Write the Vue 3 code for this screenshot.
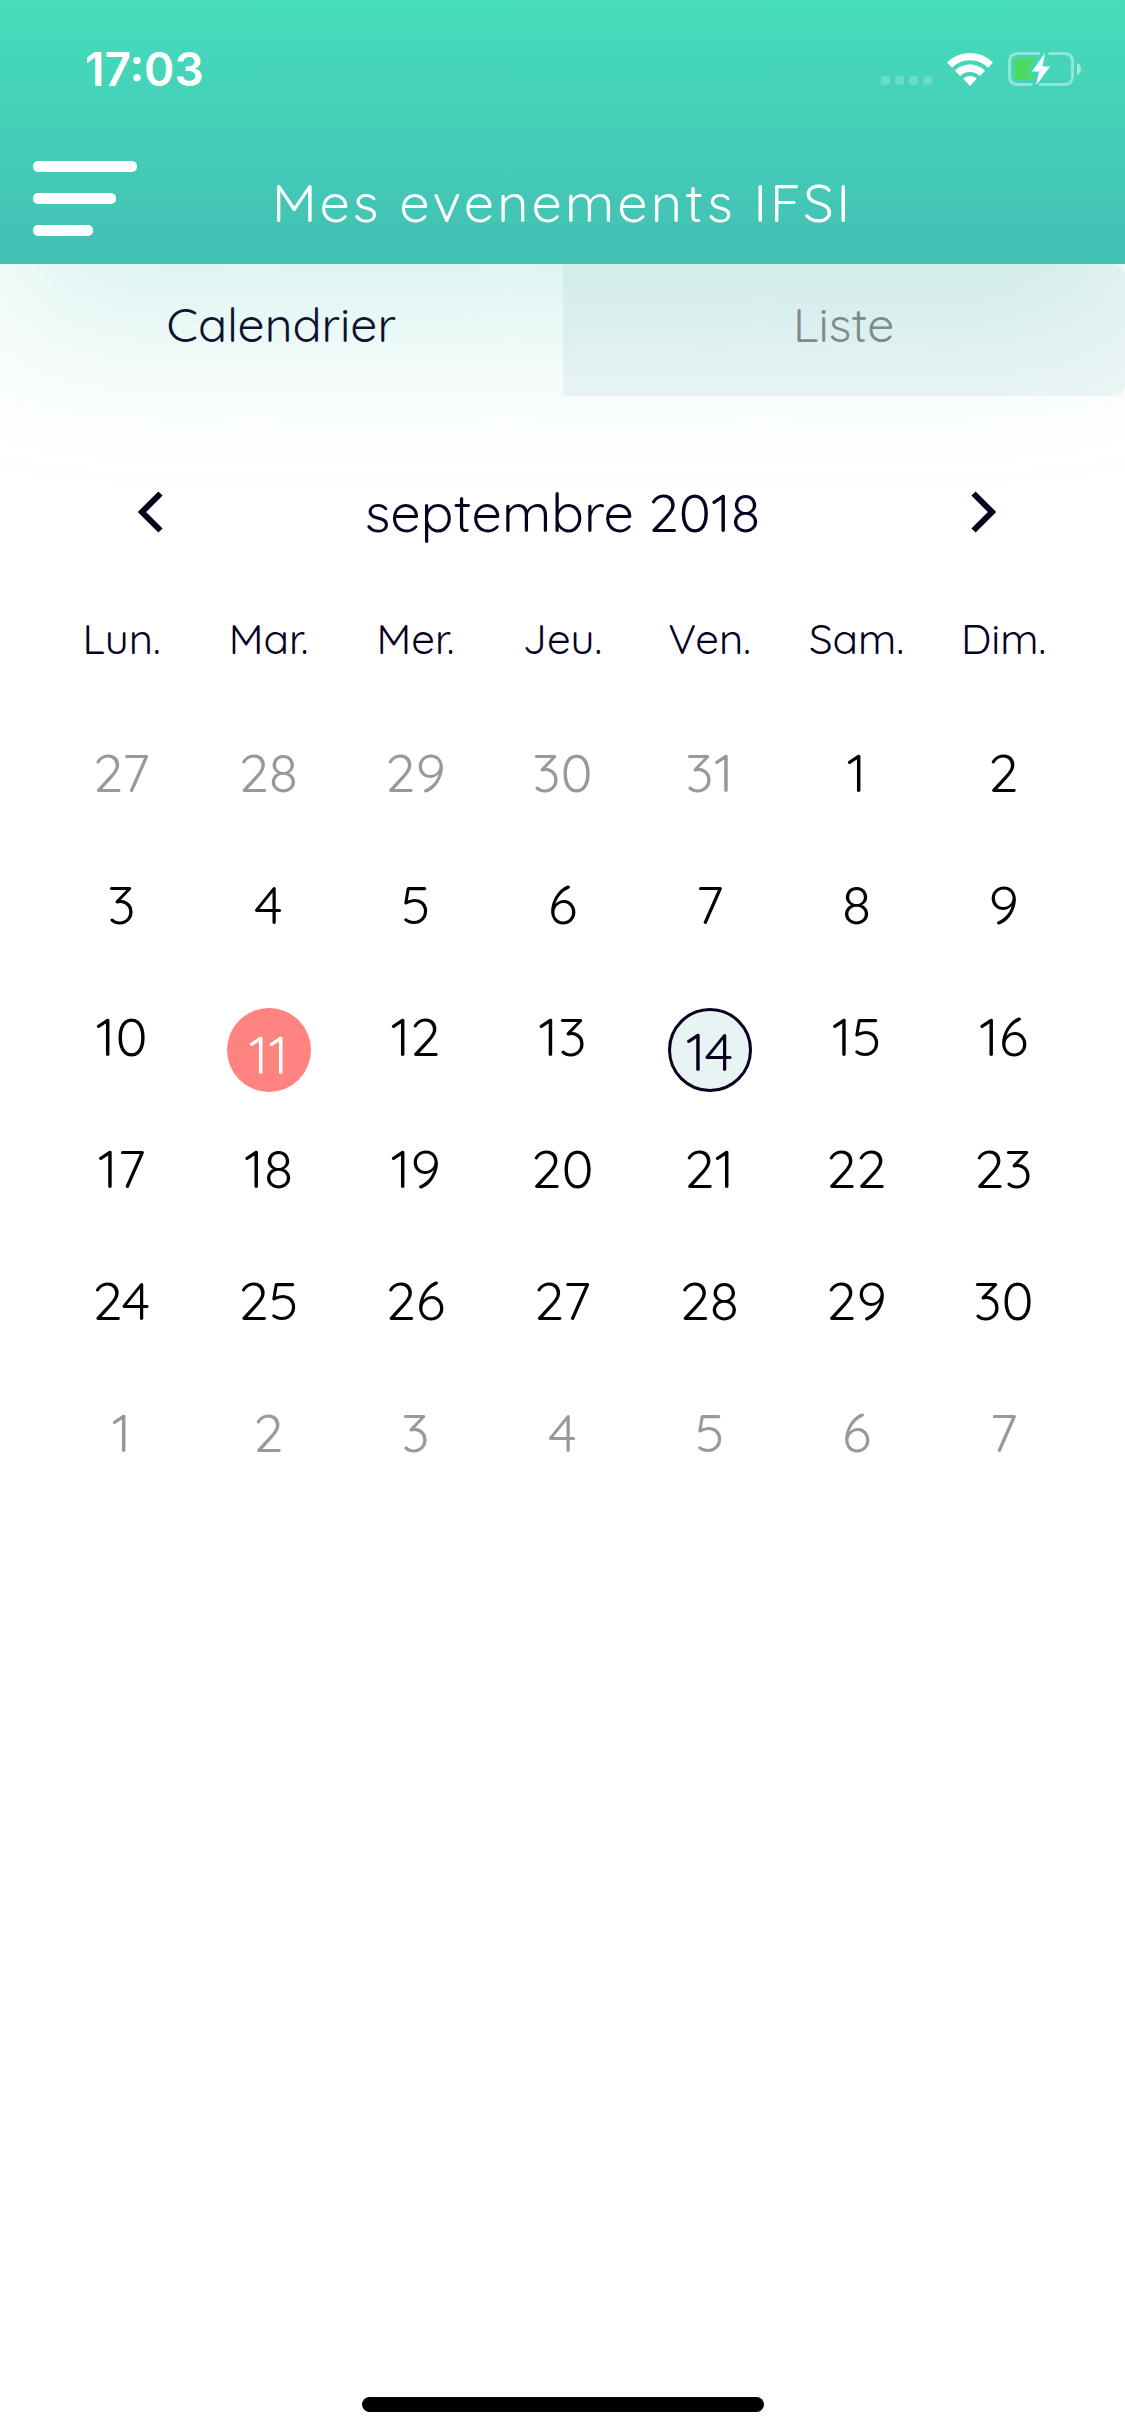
<template>
	<div class="screen">
		<header class="header">
			<div class="status-bar">
				<span class="clock">17:03</span>
				<div class="status-icons">
					<svg class="signal" width="51" height="33" viewBox="0 0 51 33" aria-hidden="true">
						<rect v-for="n in 4" :key="n" :x="(n - 1) * 14" y="23" width="9" height="9" rx="3" />
					</svg>
					<svg class="wifi" width="46" height="33" viewBox="0 0 46 33" aria-hidden="true">
						<path d="M23 0C14 0 6 3.600 0 9.600L5 14.800C9.800 10 16.200 7.300 23 7.300S36.200 10 41 14.800L46 9.600C40 3.600 32 0 23 0Z" />
						<path d="M23 11.500C17.300 11.500 12 13.800 8 17.700L13.200 23C15.800 20.500 19.200 19 23 19S30.200 20.500 32.800 23L38 17.700C34 13.800 28.700 11.500 23 11.500Z" />
						<path d="M23 23C20.500 23 18.100 24 16.300 25.800L23 33L29.700 25.800C27.900 24 25.500 23 23 23Z" />
					</svg>
					<svg class="battery" width="74" height="34" viewBox="0 0 74 34" aria-hidden="true">
						<path class="battery-case" d="M32 1.500H10Q1.500 1.500 1.500 10V24Q1.500 32.500 10 32.500H24.500M31 32.500H56Q64.500 32.500 64.500 24V10Q64.500 1.500 56 1.500H40.500" />
						<path class="battery-case-end" d="M69 11Q73 13 73 17T69 23Z" />
						<path class="battery-level" d="M9 6H28L19 22H26L25 28H9Q6 28 6 25V9Q6 6 9 6Z" />
						<path class="battery-bolt" d="M37 1L24 19.500H31L28 33.500L42 14.500H34.500Z" />
					</svg>
				</div>
			</div>

			<div class="nav-bar">
				<button type="button" class="menu-button" aria-label="Menu">
					<svg width="104" height="75" viewBox="0 0 104 75" aria-hidden="true">
						<rect width="104" height="11" rx="5" />
						<rect y="32" width="83" height="11" rx="5" />
						<rect y="64" width="60" height="11" rx="5" />
					</svg>
				</button>
				<h1 class="title">Mes evenements IFSI</h1>
			</div>
		</header>

		<nav class="tabs">
			<button
				v-for="tab in tabs"
				:key="tab"
				type="button"
				class="tab"
				:class="{ 'is-active': tab === activeTab }"
				@click="activeTab = tab"
			>
				{{ tab }}
			</button>
		</nav>

		<main class="calendar">
			<div class="month-bar">
				<button type="button" class="arrow" aria-label="Mois précédent">
					<svg width="33" height="42" viewBox="-8 0 33 42" aria-hidden="true">
						<path d="M22.500 2.500L4 21L22.500 39.500" />
					</svg>
				</button>
				<h2 class="month">septembre 2018</h2>
				<button type="button" class="arrow" aria-label="Mois suivant">
					<svg width="33" height="42" viewBox="-8 0 33 42" aria-hidden="true">
						<path d="M2.500 2.500L21 21L2.500 39.500" />
					</svg>
				</button>
			</div>

			<table class="days">
				<thead>
					<tr>
						<th v-for="name in weekdays" :key="name" scope="col">{{ name }}</th>
					</tr>
				</thead>
				<tbody>
					<tr v-for="(week, index) in weeks" :key="index">
						<td v-for="day in week" :key="day.key">
							<button
								type="button"
								class="day"
								:class="{
									'is-outside': day.outside,
									'is-event': day.key === eventKey,
									'is-selected': day.key === selectedKey,
								}"
								@click="selectedKey = day.key"
							>
								{{ day.number }}
							</button>
						</td>
					</tr>
				</tbody>
			</table>
		</main>

		<div class="home-indicator"></div>
	</div>
</template>

<script setup>
import { computed, ref } from 'vue';

const tabs = ['Calendrier', 'Liste'];
const weekdays = ['Lun.', 'Mar.', 'Mer.', 'Jeu.', 'Ven.', 'Sam.', 'Dim.'];

const activeTab = ref('Calendrier');
const selectedKey = ref('8-14');
const eventKey = '8-11';

// Six weeks, starting on the Monday before the 1st of the month.
const weeks = computed(() => {
	const rows = [];

	for (let row = 0; row < 6; row += 1) {
		const week = [];

		for (let col = 0; col < 7; col += 1) {
			const date = new Date(2018, 7, 27 + row * 7 + col);

			week.push({
				key: `${date.getMonth()}-${date.getDate()}`,
				number: date.getDate(),
				outside: date.getMonth() !== 8,
			});
		}

		rows.push(week);
	}

	return rows;
});
</script>

<style>
body {
	margin: 0;
	background: #fff;
}
</style>

<style scoped>
.screen {
	display: flex;
	flex-direction: column;
	min-height: 100vh;
	background: #fff;
	color: #07001f;
	font-family: Quicksand, Roboto, "Liberation Sans", sans-serif;
	font-weight: 400;
	overflow: hidden;
}

button {
	margin: 0;
	padding: 0;
	border: 0;
	background: none;
	color: inherit;
	font: inherit;
	cursor: pointer;
}

svg {
	display: block;
}

/* The header's glow falls over the tabs. */
.header {
	position: relative;
	z-index: 1;
	background: linear-gradient(#46ddbb, #43bfb4);
	box-shadow: 0 60px 160px rgba(60, 190, 175, 0.22);
	color: #fff;
}

.status-bar {
	display: flex;
	align-items: center;
	justify-content: space-between;
	height: 138px;
	padding: 0 43px 0 85px;
}

.clock {
	font-family: Inter, "Liberation Sans", sans-serif;
	font-size: 46px;
	font-weight: 600;
}

.status-icons {
	display: flex;
	align-items: center;
	gap: 15px;
	fill: #fff;
}

.signal {
	opacity: 0.2;
}

.battery-case {
	fill: none;
	stroke: #fff;
	stroke-width: 3;
	opacity: 0.4;
}

.battery-case-end {
	opacity: 0.5;
}

.battery-level {
	fill: #4cd964;
}

.nav-bar {
	display: grid;
	grid-template-columns: 1fr auto 1fr;
	align-items: center;
	height: 120px;
	padding: 0 33px 6px;
}

.menu-button {
	justify-self: start;
	fill: #fff;
}

.title {
	margin: 0;
	padding-top: 8px;
	font-size: 54px;
	font-weight: 400;
	letter-spacing: 3px;
}

.tabs {
	display: flex;
}

.tab {
	flex: 1;
	height: 132px;
	padding-bottom: 12px;
	border-radius: 0 12px 12px 0;
	background: #eff6f6;
	color: #868686;
	font-size: 48px;
}

.tab.is-active {
	background: none;
	color: #07001f;
}

.calendar {
	padding: 0 48px;
}

.month-bar {
	display: flex;
	align-items: center;
	justify-content: space-between;
	margin-top: 74px;
	padding: 0 56px;
}

.arrow {
	display: grid;
	place-items: center;
	width: 84px;
	height: 84px;
	fill: none;
	stroke: #07001f;
	stroke-width: 6;
}

.month {
	margin: 0;
	font-size: 54px;
	font-weight: 400;
}

.days {
	width: 100%;
	border-collapse: collapse;
	table-layout: fixed;
}

.days th {
	height: 168px;
	padding: 0 0 22px;
	font-size: 42px;
	font-weight: 400;
	text-align: center;
}

.days td {
	height: 132px;
	padding: 0;
	text-align: center;
	vertical-align: top;
}

.day {
	display: flex;
	justify-content: center;
	box-sizing: border-box;
	width: 84px;
	height: 84px;
	margin: 0 auto;
	border-radius: 50%;
	color: #000;
	font-size: 54px;
	line-height: 56px;
}

.day.is-outside {
	color: #999;
}

.day.is-event {
	background: #ff8480;
	color: #fff;
	line-height: 92px;
}

.day.is-selected {
	border: 3px solid #07001f;
	background: #e8f3f3;
	color: #07001f;
	line-height: 80px;
}

.home-indicator {
	width: 402px;
	height: 15px;
	margin: auto auto 24px;
	border-radius: 8px;
	background: #000;
}
</style>
